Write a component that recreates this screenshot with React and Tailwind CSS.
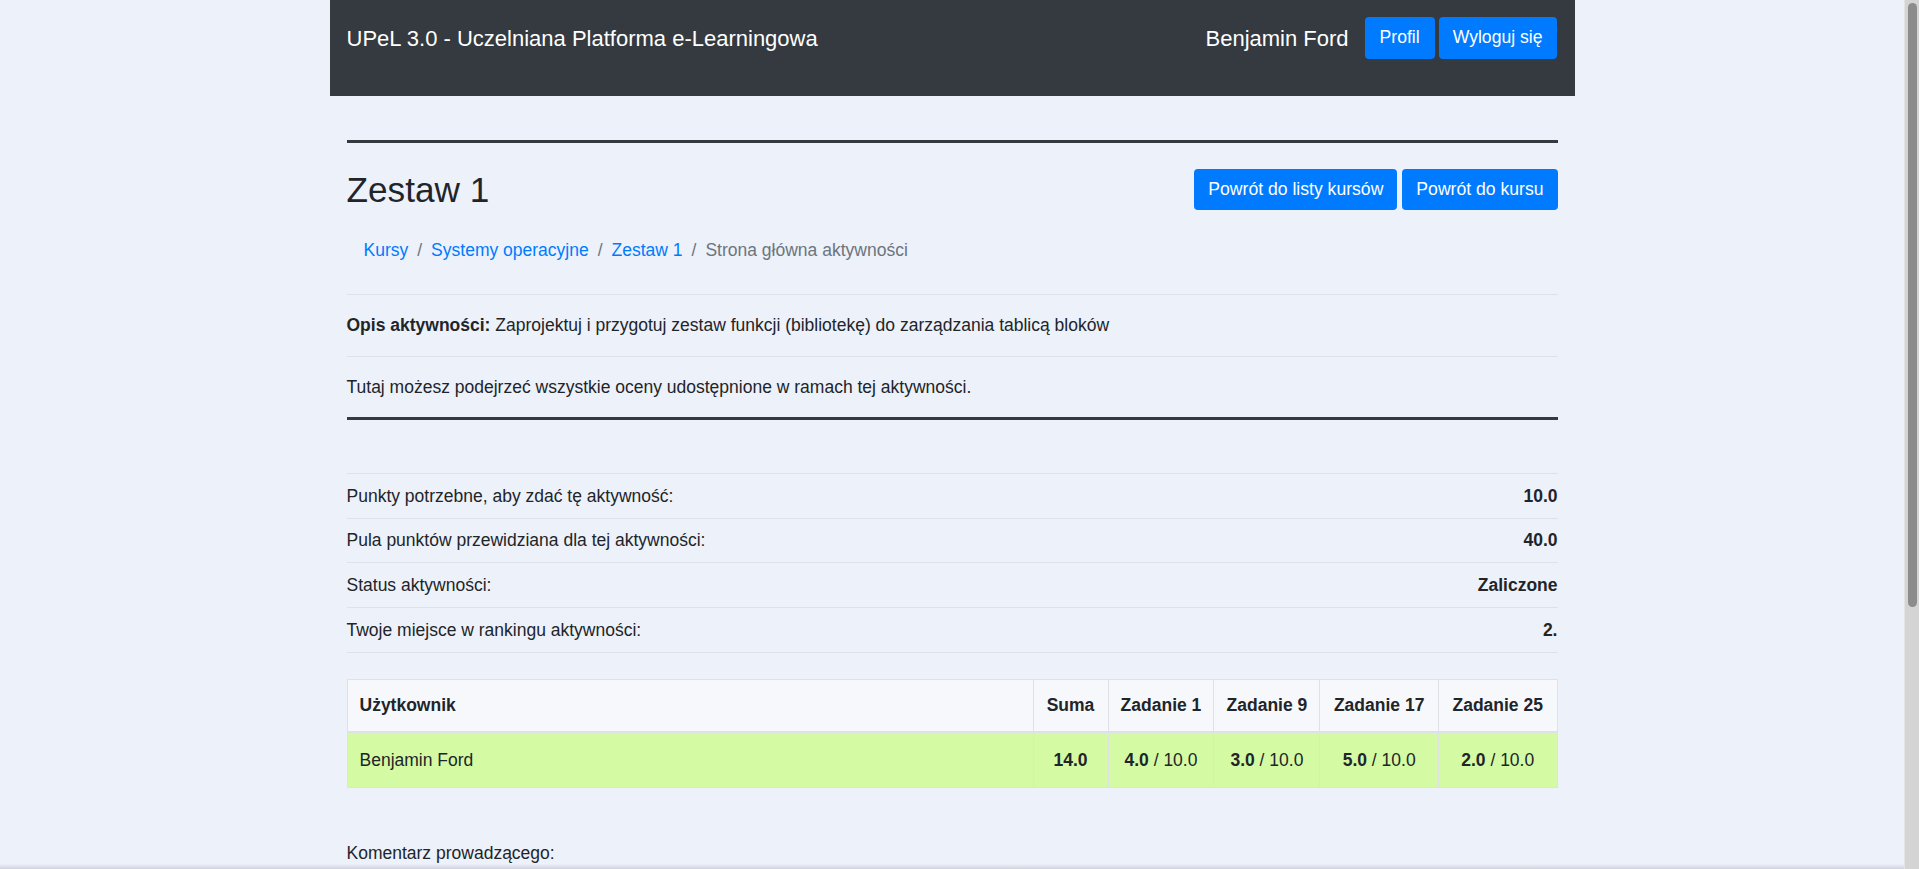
import React from 'react';

const font = { fontFamily: '"Liberation Sans", Arial, sans-serif' };

const stats = [
    ['Punkty potrzebne, aby zdać tę aktywność:', '10.0'],
    ['Pula punktów przewidziana dla tej aktywności:', '40.0'],
    ['Status aktywności:', 'Zaliczone'],
    ['Twoje miejsce w rankingu aktywności:', '2.'],
];

const zadania = [
    ['Zadanie 1', '4.0'],
    ['Zadanie 9', '3.0'],
    ['Zadanie 17', '5.0'],
    ['Zadanie 25', '2.0'],
];

const Btn = ({ children }) => (
    <button className="h-[41px] px-[14px] rounded-[4px] bg-[#007bff] text-white text-[17.6px] leading-none">
        {children}
    </button>
);

const Header = () => (
    <div className="h-[96px] bg-[#343a40] pl-[17px] pr-[18px] pt-[17px]">
        <div className="h-[42px] flex items-center justify-between">
            <span className="text-[22px] text-white">UPeL 3.0 - Uczelniana Platforma e-Learningowa</span>
            <div className="flex items-center">
                <span className="text-[22px] text-white mr-[16px]">Benjamin Ford</span>
                <div className="flex gap-[4px]">
                    <button className="h-[42px] px-[15px] rounded-[4px] bg-[#007bff] text-white text-[17.6px] leading-none">Profil</button>
                    <button className="h-[42px] px-[14px] rounded-[4px] bg-[#007bff] text-white text-[17.6px] leading-none">Wyloguj się</button>
                </div>
            </div>
        </div>
    </div>
);

// pasek przewijania jak w oknie przegladarki
const Scrollbar = () => (
    <div className="fixed top-0 right-0 bottom-0 w-[15px] bg-[#d4d4d4] border-l border-[#e4e4e4] flex justify-center">
        <div className="mt-[3px] w-[9px] h-[604px] rounded-full bg-[#8c8c8c]" />
    </div>
);

export default function App() {
    return (
        <div className="min-h-[1240px] bg-[#edf1fa] text-[#212529] text-[17.5px] pr-[15px]" style={font}>
            <div className="w-[1245px] mx-auto">
                <Header />
                <div className="px-[17px]">
                    <div className="mt-[44px] h-[3px] bg-[#343a40]" />

                    {/* tytul + powroty */}
                    <div className="mt-[26px] h-[41px] flex items-center justify-between">
                        <h2 className="text-[35.2px] leading-none">Zestaw 1</h2>
                        <div className="flex gap-[5px]">
                            <Btn>Powrót do listy kursów</Btn>
                            <Btn>Powrót do kursu</Btn>
                        </div>
                    </div>

                    <div className="mt-[17px] h-[46px] flex items-center pl-[17px] gap-[9px]">
                        <a className="text-[#007bff]">Kursy</a>
                        <span className="text-[#6c757d]">/</span>
                        <a className="text-[#007bff]">Systemy operacyjne</a>
                        <span className="text-[#6c757d]">/</span>
                        <a className="text-[#007bff]">Zestaw 1</a>
                        <span className="text-[#6c757d]">/</span>
                        <span className="text-[#6c757d]">Strona główna aktywności</span>
                    </div>

                    <div className="mt-[21px] h-px bg-[#dde1ea]" />
                    <div className="h-[61px] flex items-center">
                        <p><b>Opis aktywności:</b> Zaprojektuj i przygotuj zestaw funkcji (bibliotekę) do zarządzania tablicą bloków</p>
                    </div>
                    <div className="h-px bg-[#dde1ea]" />
                    <div className="h-[60px] flex items-center">
                        <p>Tutaj możesz podejrzeć wszystkie oceny udostępnione w ramach tej aktywności.</p>
                    </div>
                    <div className="h-[3px] bg-[#343a40]" />

                    {/* podsumowanie */}
                    <div className="mt-[53px] border-b border-[#dde1ea]">
                        {stats.map(([label, val]) => (
                            <div key={label} className="h-[44.7px] border-t border-[#dde1ea] flex items-center justify-between">
                                <span>{label}</span>
                                <span className="font-bold">{val}</span>
                            </div>
                        ))}
                    </div>

                    {/* oceny */}
                    <table className="mt-[26px] w-full border-collapse">
                        <thead>
                            <tr className="h-[53px] bg-[#f7f8fb] font-bold">
                                <th className="border border-b-2 border-[#dee2e6] text-left pl-[12px] w-[686px]">Użytkownik</th>
                                <th className="border border-b-2 border-[#dee2e6] w-[75px]">Suma</th>
                                {zadania.map(([z]) => (
                                    <th key={z} className="border border-b-2 border-[#dee2e6]">{z}</th>
                                ))}
                            </tr>
                        </thead>
                        <tbody>
                            <tr className="h-[55px] bg-[#d4fba3]">
                                <td className="border border-[#dee2e6] pl-[12px]">Benjamin Ford</td>
                                <td className="border border-[#dee2e6] text-center font-bold">14.0</td>
                                {zadania.map(([z, p]) => (
                                    <td key={z} className="border border-[#dee2e6] text-center"><b>{p}</b> / 10.0</td>
                                ))}
                            </tr>
                        </tbody>
                    </table>

                    <p className="mt-[52px] leading-[26px]">Komentarz prowadzącego:</p>
                    <div className="mt-[16px] h-[120px] rounded-[4px] border border-[#ced4da] bg-white" />
                </div>
            </div>
            <div className="fixed bottom-0 left-0 right-[15px] h-[5px] bg-gradient-to-b from-transparent to-[#cfd3dc]" />
            <Scrollbar />
        </div>
    );
}
